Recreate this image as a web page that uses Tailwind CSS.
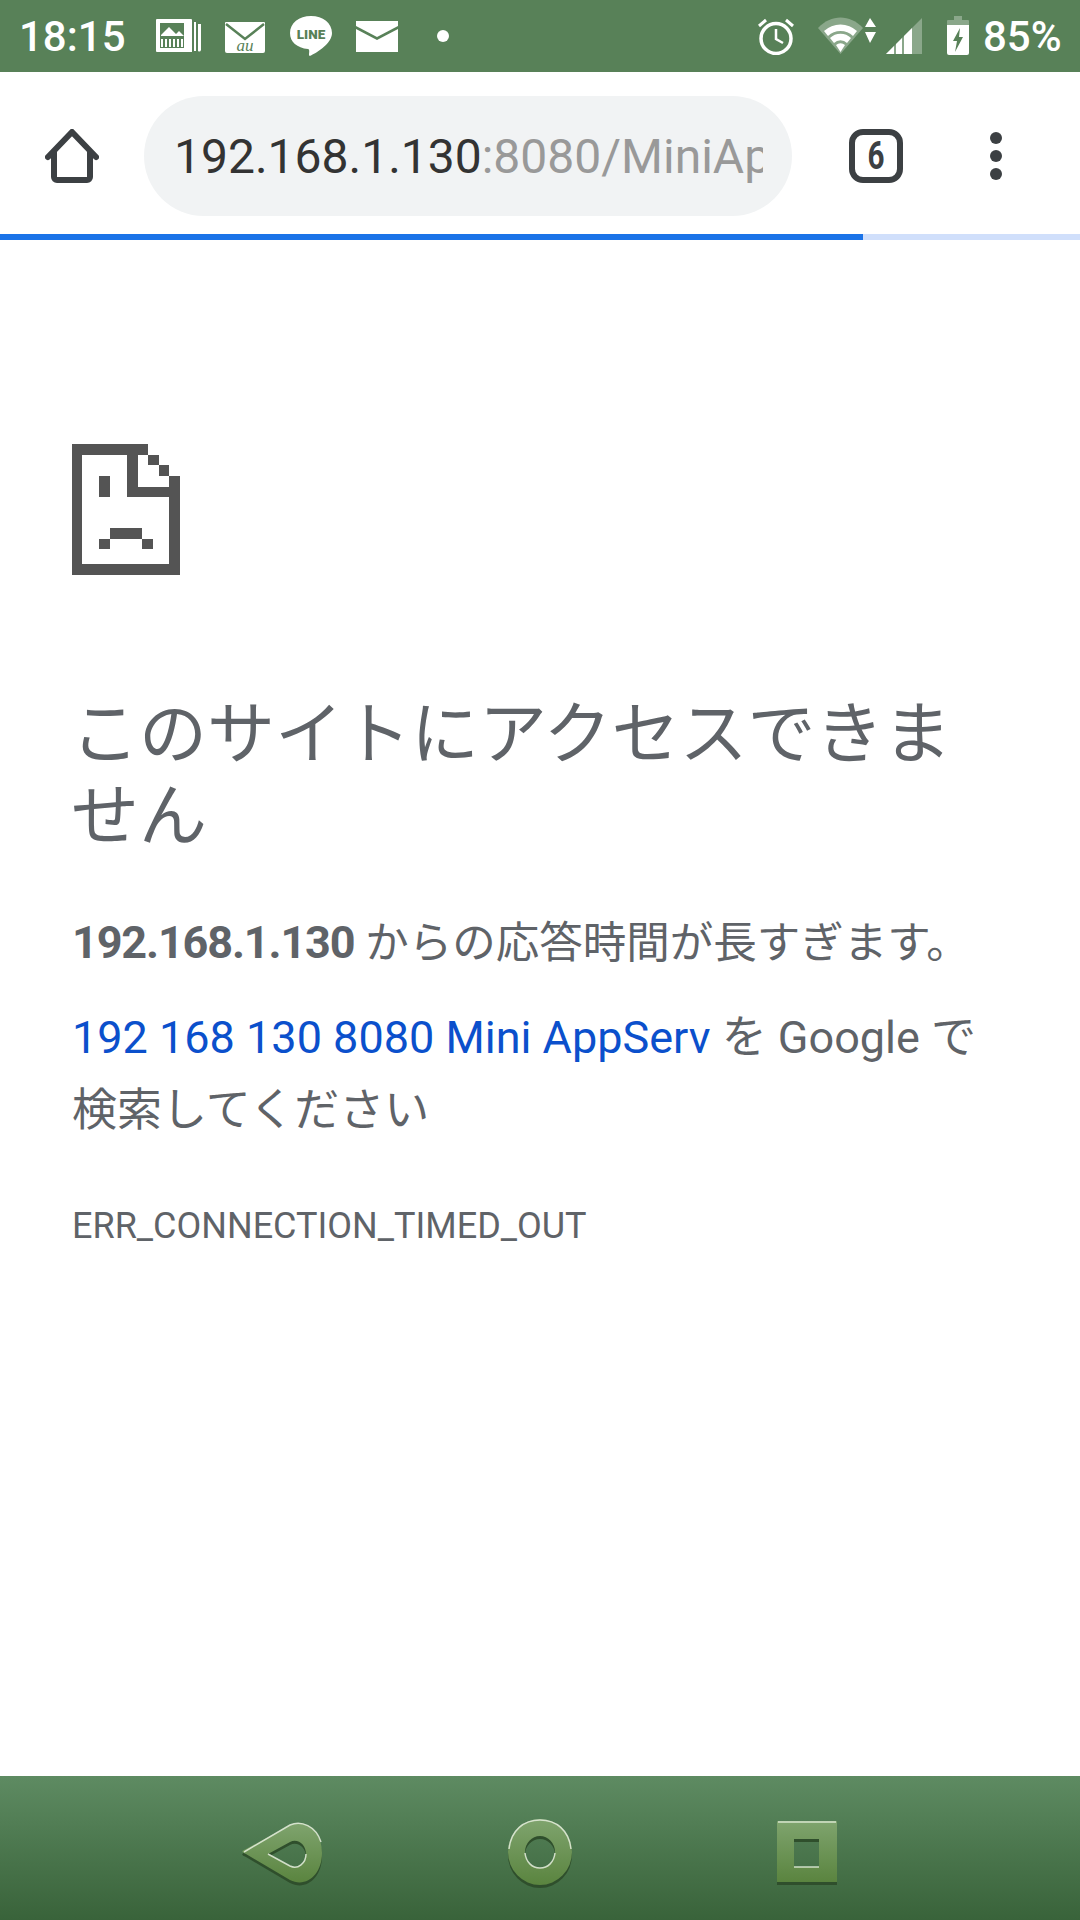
<!DOCTYPE html>
<html lang="ja">
<head>
<meta charset="utf-8">
<script src="https://cdn.jsdelivr.net/npm/@tailwindcss/browser@4"></script>
</head>
<body class="bg-white">
<div class="w-[1080px] h-[1920px] flex flex-col overflow-hidden font-['Roboto','Noto_Sans_CJK_JP',sans-serif]">

  <!-- status bar -->
  <div class="relative h-[72px] shrink-0 bg-[#588158] text-white">
    <span class="absolute left-[19px] top-[13px] text-[42px] leading-[48px] font-medium">18:15</span>
    <svg class="absolute left-[156px] top-[19px]" width="45" height="33" viewBox="0 0 45 33">
      <path d="M0 1a1 1 0 0 1 1-1h34a1 1 0 0 1 1 1v32H1a1 1 0 0 1-1-1z" fill="#fff"/>
      <path d="M38 3h2v29h-2z M42 5h3v26a2 2 0 0 1-3 1z" fill="#fff"/>
      <rect x="4" y="4" width="24" height="25" fill="#588158"/>
      <rect x="29" y="4" width="5" height="25" fill="#fff"/>
      <path d="M5 16l8-8 7 7 3-3 5 5H5z" fill="#fff"/>
      <path d="M5 20h2v8H5zM9 20h2v8H9zM13 20h2v8h-2zM17 20h2v8h-2zM21 20h2v8h-2zM25 20h2v8h-2z" fill="#fff"/>
    </svg>
    <svg class="absolute left-[225px] top-[22px]" width="40" height="31" viewBox="0 0 40 31">
      <path d="M1 0h38a1 1 0 0 1 1 1v28a2 2 0 0 1-2 2H2a2 2 0 0 1-2-2V1a1 1 0 0 1 1-1z" fill="#fff"/>
      <path d="M1 2l19 15L39 2" fill="none" stroke="#588158" stroke-width="2.500"/>
      <text x="20" y="29" text-anchor="middle" font-family="Liberation Serif" font-style="italic" font-size="17" fill="#588158">au</text>
    </svg>
    <svg class="absolute left-[290px] top-[16px]" width="42" height="40" viewBox="0 0 42 40">
      <path d="M21 0C9 0 0 7 0 17c0 9 7 15 18 16 2 .5 1 4 1 6 0 1 1 1 2 .5 6-3 21-12 21-22.500C42 7 33 0 21 0z" fill="#fff"/>
      <text x="21" y="23" text-anchor="middle" font-family="Roboto" font-weight="900" font-size="13.500" fill="#588158">LINE</text>
    </svg>
    <svg class="absolute left-[356px] top-[21px]" width="42" height="31" viewBox="0 0 42 31">
      <path d="M0 0h42v5L21 16 0 5z" fill="#fff"/>
      <path d="M0 8l21 11L42 8v23H0z" fill="#fff"/>
    </svg>
    <div class="absolute left-[437px] top-[30px] w-3 h-3 rounded-full bg-white"></div>

    <svg class="absolute left-[758px] top-[18px]" width="36" height="37" viewBox="0 0 36 37">
      <circle cx="18" cy="20.500" r="15" fill="none" stroke="#fff" stroke-width="3.500"/>
      <path d="M18 11v10l7 4" fill="none" stroke="#fff" stroke-width="2.500"/>
      <path d="M1 8l7-6M35 8l-7-6" fill="none" stroke="#fff" stroke-width="3"/>
    </svg>
    <svg class="absolute left-[818px] top-[17px]" width="58" height="37" viewBox="0 0 58 37">
      <path d="M0 11C13 -3 32 -3 45 11L22.500 37z" fill="#fff" fill-opacity=".3"/>
      <path d="M6 14a24 24 0 0 1 33 0l-4 5a18 18 0 0 0-25 0z M12 21a15 15 0 0 1 21 0l-4 5a9 9 0 0 0-13 0z M18 28a7 7 0 0 1 9 0l-4.500 7z" fill="#fff"/>
      <path d="M52 1l6 9H47zM47 15h11l-6 11z" fill="#fff"/>
    </svg>
    <svg class="absolute left-[886px] top-[18px]" width="36" height="36" viewBox="0 0 36 36">
      <path d="M36 0v36H0z" fill="#fff" fill-opacity=".3"/>
      <path d="M0 36l8-8v8zM10 26l6-6v16h-6zM18 18l8-8v26h-8z" fill="#fff"/>
    </svg>
    <svg class="absolute left-[947px] top-[16px]" width="22" height="39" viewBox="0 0 22 39">
      <path d="M7 0h8v4h6a1 1 0 0 1 1 1v6H0V5a1 1 0 0 1 1-1h6z" fill="#fff" fill-opacity=".3"/>
      <path d="M0 9h22v28a2 2 0 0 1-2 2H2a2 2 0 0 1-2-2z" fill="#fff"/>
      <path d="M13 12L6 25h4l-2 11 8-15h-4z" fill="#588158"/>
    </svg>
    <span class="absolute left-[983px] top-[13px] text-[42px] leading-[48px] font-medium">85%</span>
  </div>

  <!-- toolbar -->
  <div class="h-[162px] shrink-0 flex items-center bg-white pt-[6px]">
    <svg class="ml-[45px] shrink-0" width="54" height="54" viewBox="0 0 54 54">
      <path d="M3 28L27 3l24 25" fill="none" stroke="#3c4043" stroke-width="6" stroke-linecap="round" stroke-linejoin="round"/>
      <path d="M9 23v25a3 3 0 0 0 3 3h30a3 3 0 0 0 3-3V23" fill="none" stroke="#3c4043" stroke-width="6"/>
    </svg>
    <div class="ml-[45px] w-[648px] h-[120px] shrink-0 rounded-full bg-[#f1f3f4] pl-[30px] pr-[29px] pt-[2px] flex items-center">
      <div class="overflow-hidden whitespace-nowrap text-[48px] leading-[60px] text-[#999999]"><span class="text-[#333333]">192.168.1.130</span>:8080/MiniAppServ</div>
    </div>
    <div class="ml-[57px] w-[54px] h-[54px] shrink-0 rounded-[14px] border-[6px] border-[#3c4043] flex items-center justify-center text-[#3c4043] text-[38px] font-bold leading-none"><span class="scale-x-[.78]">6</span></div>
    <div class="ml-[87px] flex flex-col gap-[6px] shrink-0">
      <div class="w-3 h-3 rounded-full bg-[#3c4043]"></div>
      <div class="w-3 h-3 rounded-full bg-[#3c4043]"></div>
      <div class="w-3 h-3 rounded-full bg-[#3c4043]"></div>
    </div>
  </div>

  <!-- progress -->
  <div class="h-[6px] shrink-0 bg-[#d0dffb]"><div class="h-full w-[863px] bg-[#1a73e8]"></div></div>

  <!-- content -->
  <div class="flex-1 pl-[72px] pr-[72px] pt-[204px] text-[#5f6368]">
    <svg width="108" height="131" viewBox="66 42 324 393" shape-rendering="crispEdges" fill="#545454" class="block">
      <rect x="66" y="42" width="229" height="33"/>
      <rect x="66" y="42" width="31" height="393"/>
      <rect x="66" y="403" width="324" height="32"/>
      <rect x="358" y="137" width="32" height="298"/>
      <rect x="232" y="75" width="31" height="127"/>
      <rect x="232" y="170" width="158" height="32"/>
      <rect x="295" y="75" width="32" height="30"/>
      <rect x="327" y="105" width="31" height="32"/>
      <rect x="147" y="137" width="32" height="65"/>
      <rect x="179" y="295" width="98" height="32"/>
      <rect x="147" y="327" width="32" height="31"/>
      <rect x="277" y="327" width="32" height="31"/>
    </svg>
    <h1 class="mt-[119px] -ml-[1px] text-[68px] leading-[82px] font-normal">このサイトにアクセスできません</h1>
    <p class="mt-[49px] text-[43.5px] leading-[71px]"><b class="font-bold text-[45px] tracking-[-1.15px]">192.168.1.130</b> からの応答時間が長すぎます。</p>
    <p class="mt-[22px] text-[45px] leading-[73px]"><span class="text-[#0b50cc]">192 168 130 8080 Mini AppServ</span> を Google で検索してください</p>
    <p class="mt-[55px] text-[36px] leading-[48px]">ERR_CONNECTION_TIMED_OUT</p>
  </div>

  <!-- nav bar -->
  <div class="h-[144px] shrink-0 bg-gradient-to-b from-[#5e8b62] to-[#39633a] flex items-center pl-[240px]">
    <svg width="84" height="68" viewBox="240 1820 84 68" class="shrink-0 overflow-visible mt-[10px]">
      <defs>
        <linearGradient id="g" x1="0" y1="0" x2="0" y2="1"><stop offset="0" stop-color="#7fa46e"/><stop offset="1" stop-color="#5a843f"/></linearGradient>
      </defs>
      <path fill-rule="evenodd" transform="translate(0 3)" fill="#2f4f2c" d="M246 1850l44-24c14-7 32 4 32 28 0 22-16 35-32 27l-44-26c-5-2-5-3 0-5zM268 1855l22 12c8 4 16-3 16-12s-8-16-16-12z"/>
      <path fill-rule="evenodd" fill="url(#g)" d="M246 1850l44-24c14-7 32 4 32 28 0 22-16 35-32 27l-44-26c-5-2-5-3 0-5zM268 1855l22 12c8 4 16-3 16-12s-8-16-16-12z"/>
      <path d="M244 1853l46-27c11-5 26 1 31 17M268 1855l22 12c8 4 16-3 16-12" fill="none" stroke="#e6eede" stroke-width="1.500" stroke-opacity=".85"/>
    </svg>
    <svg width="64" height="68" viewBox="0 0 64 68" class="shrink-0 ml-[184px] mt-[10px] overflow-visible">
      <path fill-rule="evenodd" fill="#2f4f2c" transform="translate(0 3)" d="M32 0a32 33 0 1 0 0 66a32 33 0 1 0 0-66zM32 17a15 16 0 1 1 0 32a15 16 0 1 1 0-32z"/>
      <path fill-rule="evenodd" fill="url(#g)" d="M32 0a32 33 0 1 0 0 66a32 33 0 1 0 0-66zM32 17a15 16 0 1 1 0 32a15 16 0 1 1 0-32z"/>
      <path d="M1 30C3 11 16 1 32 1s29 10 31 29M17 34c1 9 7 15 15 15s14-6 15-15" fill="none" stroke="#e6eede" stroke-width="1.500" stroke-opacity=".85"/>
    </svg>
    <svg width="60" height="64" viewBox="0 0 60 64" class="shrink-0 ml-[205px] mt-[10px] overflow-visible">
      <path fill-rule="evenodd" fill="#2f4f2c" transform="translate(0 3)" d="M1 0h58a1 1 0 0 1 1 1v60H0V1a1 1 0 0 1 1-1zM17 18v28h25V18z"/>
      <path fill-rule="evenodd" fill="url(#g)" d="M1 0h58a1 1 0 0 1 1 1v60H0V1a1 1 0 0 1 1-1zM17 18v28h25V18z"/>
      <path d="M1 1h58M17 46h25" fill="none" stroke="#e6eede" stroke-width="1.500" stroke-opacity=".85"/>
    </svg>
  </div>
</div>
</body>
</html>
